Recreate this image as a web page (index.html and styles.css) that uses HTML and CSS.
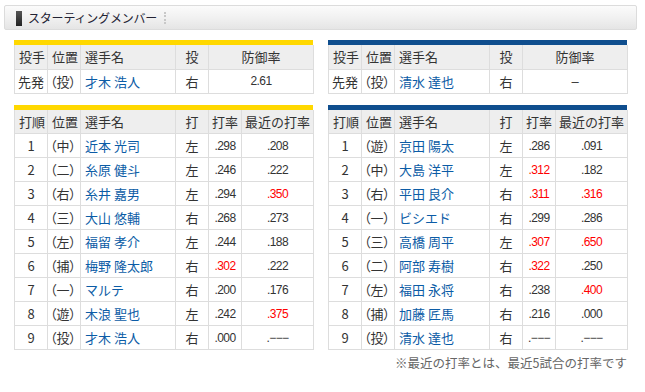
FILE: index.html
```html
<!DOCTYPE html>
<html lang="ja">
<head>
<meta charset="utf-8">
<title>スターティングメンバー</title>
<link rel="stylesheet" href="styles.css">
</head>
<body>
<div class="page">
  <div class="title-bar">
    <span class="mark"></span>
    <h2 class="title">スターティングメンバー</h2>
    <span class="sep"></span>
  </div>

  <div class="teams">
    <div class="team team-home">
      <table class="lineup pitcher">
        <colgroup><col class="c-a"><col class="c-b"><col class="c-name"><col class="c-d"><col class="c-era"></colgroup>
        <tr><th class="l">投手</th><th class="l">位置</th><th class="l">選手名</th><th>投</th><th>防御率</th></tr>
        <tr><td class="l">先発</td><td class="l pos">（投）</td><td class="l name">才木 浩人</td><td>右</td><td class="num">2.61</td></tr>
      </table>
    </div>
    <div class="team team-away">
      <table class="lineup pitcher">
        <colgroup><col class="c-a"><col class="c-b"><col class="c-name"><col class="c-d"><col class="c-era"></colgroup>
        <tr><th class="l">投手</th><th class="l">位置</th><th class="l">選手名</th><th>投</th><th>防御率</th></tr>
        <tr><td class="l">先発</td><td class="l pos">（投）</td><td class="l name">清水 達也</td><td>右</td><td class="num dash">–</td></tr>
      </table>
    </div>

    <div class="team team-home">
      <table class="lineup">
        <colgroup><col class="c-a"><col class="c-b"><col class="c-name"><col class="c-d"><col class="c-e"><col class="c-f"></colgroup>
        <tr><th class="l">打順</th><th class="l">位置</th><th class="l">選手名</th><th>打</th><th>打率</th><th>最近の打率</th></tr>
        <tr><td>1</td><td class="l pos">（中）</td><td class="l name">近本 光司</td><td>左</td><td class="num">.298</td><td class="num">.208</td></tr>
        <tr><td>2</td><td class="l pos">（二）</td><td class="l name">糸原 健斗</td><td>左</td><td class="num">.246</td><td class="num">.222</td></tr>
        <tr><td>3</td><td class="l pos">（右）</td><td class="l name">糸井 嘉男</td><td>左</td><td class="num">.294</td><td class="num hot">.350</td></tr>
        <tr><td>4</td><td class="l pos">（三）</td><td class="l name">大山 悠輔</td><td>右</td><td class="num">.268</td><td class="num">.273</td></tr>
        <tr><td>5</td><td class="l pos">（左）</td><td class="l name">福留 孝介</td><td>左</td><td class="num">.244</td><td class="num">.188</td></tr>
        <tr><td>6</td><td class="l pos">（捕）</td><td class="l name">梅野 隆太郎</td><td>右</td><td class="num hot">.302</td><td class="num">.222</td></tr>
        <tr><td>7</td><td class="l pos">（一）</td><td class="l name">マルテ</td><td>右</td><td class="num">.200</td><td class="num">.176</td></tr>
        <tr><td>8</td><td class="l pos">（遊）</td><td class="l name">木浪 聖也</td><td>左</td><td class="num">.242</td><td class="num hot">.375</td></tr>
        <tr><td>9</td><td class="l pos">（投）</td><td class="l name">才木 浩人</td><td>右</td><td class="num">.000</td><td class="num">.−−−</td></tr>
      </table>
    </div>
    <div class="team team-away">
      <table class="lineup">
        <colgroup><col class="c-a"><col class="c-b"><col class="c-name"><col class="c-d"><col class="c-e"><col class="c-f"></colgroup>
        <tr><th class="l">打順</th><th class="l">位置</th><th class="l">選手名</th><th>打</th><th>打率</th><th>最近の打率</th></tr>
        <tr><td>1</td><td class="l pos">（遊）</td><td class="l name">京田 陽太</td><td>左</td><td class="num">.286</td><td class="num">.091</td></tr>
        <tr><td>2</td><td class="l pos">（中）</td><td class="l name">大島 洋平</td><td>左</td><td class="num hot">.312</td><td class="num">.182</td></tr>
        <tr><td>3</td><td class="l pos">（右）</td><td class="l name">平田 良介</td><td>右</td><td class="num hot">.311</td><td class="num hot">.316</td></tr>
        <tr><td>4</td><td class="l pos">（一）</td><td class="l name">ビシエド</td><td>右</td><td class="num">.299</td><td class="num">.286</td></tr>
        <tr><td>5</td><td class="l pos">（三）</td><td class="l name">高橋 周平</td><td>左</td><td class="num hot">.307</td><td class="num hot">.650</td></tr>
        <tr><td>6</td><td class="l pos">（二）</td><td class="l name">阿部 寿樹</td><td>右</td><td class="num hot">.322</td><td class="num">.250</td></tr>
        <tr><td>7</td><td class="l pos">（左）</td><td class="l name">福田 永将</td><td>右</td><td class="num">.238</td><td class="num hot">.400</td></tr>
        <tr><td>8</td><td class="l pos">（捕）</td><td class="l name">加藤 匠馬</td><td>右</td><td class="num">.216</td><td class="num">.000</td></tr>
        <tr><td>9</td><td class="l pos">（投）</td><td class="l name">清水 達也</td><td>右</td><td class="num">.−−−</td><td class="num">.−−−</td></tr>
      </table>
    </div>
  </div>

  <p class="note">※最近の打率とは、最近5試合の打率です</p>
</div>
</body>
</html>
```

FILE: styles.css
```css
* { box-sizing: border-box; }

html, body {
  margin: 0;
  padding: 0;
  background: #fff;
}

body {
  font-family: "Liberation Sans", "Noto Sans CJK JP", sans-serif;
  font-size: 13px;
  color: #333;
}

.page {
  width: 645px;
  padding-top: 5px;
}

.title-bar {
  display: flex;
  align-items: center;
  height: 25px;
  margin: 0 8px 0 4px;
  padding-left: 11px;
  border: 1px solid #dcdcdc;
  border-radius: 2px;
  background: linear-gradient(#fbfbfb, #f1f1f1 50%, #e5e5e5);
}

.mark {
  width: 6px;
  height: 15px;
  background: linear-gradient(#555, #222);
  margin-right: 6px;
  margin-top: 2px;
}

.title {
  margin: 0;
  font-family: "Noto Sans CJK JP", sans-serif;
  font-size: 12px;
  font-weight: normal;
  color: #222233;
  letter-spacing: -0.2px;
  line-height: 1;
}

.sep {
  width: 0;
  height: 12px;
  margin-left: 7px;
  border-left: 2px dotted #c8c8c8;
}

.teams {
  display: grid;
  grid-template-columns: 299px 299px;
  column-gap: 15px;
  row-gap: 11px;
  padding-left: 14px;
  margin-top: 10px;
}

.team-home { border-top: 5px solid #ffd800; }
.team-away { border-top: 5px solid #0f4e8e; }

.lineup {
  width: 299px;
  border-collapse: collapse;
  table-layout: fixed;
}

.lineup th,
.lineup td {
  height: 24px;
  padding: 0;
  border: 1px solid #dddddd;
  text-align: center;
  font-weight: normal;
  white-space: nowrap;
  overflow: hidden;
  font-family: "Noto Sans CJK JP", sans-serif;
  line-height: 1;
}

.lineup th {
  background: #eeeeee;
  color: #333;
}

.lineup tr:first-child th { border-top: 0; }

.lineup .l {
  text-align: left;
  padding-left: 4px;
}

.lineup td.l { padding-left: 3px; }
.lineup td.pos {
  padding-left: 2px;
  font-feature-settings: "palt";
}
.lineup td.name { padding-left: 4px; }

.name { color: #0b5ca6; }

.lineup td.num {
  font-family: "Liberation Sans", sans-serif;
  font-size: 12px;
  letter-spacing: -0.6px;
}

.lineup td.dash {
  font-size: 13px;
  letter-spacing: 0;
}

.hot { color: #ff0000; }

.c-a { width: 33px; }
.c-b { width: 33px; }
.c-name { width: 95px; }
.c-d { width: 33px; }
.c-e { width: 33px; }
.c-f { width: 72px; }
.c-era { width: 105px; }

.note {
  margin: 7px 18px 0 0;
  text-align: right;
  font-family: "Noto Sans CJK JP", sans-serif;
  font-size: 12.5px;
  color: #666;
  line-height: 1;
}
```
